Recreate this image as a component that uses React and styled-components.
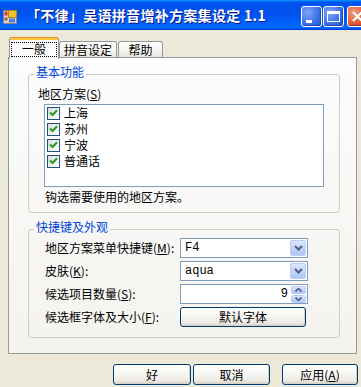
import React from 'react';
import styled, { createGlobalStyle } from 'styled-components';

const GlobalStyle = createGlobalStyle`
  html, body {
    margin: 0;
    padding: 0;
    background: #ECE9D8;
    overflow: hidden;
  }
  body {
    font-family: "Noto Sans CJK SC", sans-serif;
    font-size: 12px;
    color: #000;
  }
`;

const Window = styled.div`
  width: 361px;
  height: 387px;
  overflow: hidden;
  background: #ECE9D8;
  display: flex;
  flex-direction: column;
`;

const TitleBar = styled.div`
  height: 30px;
  flex: none;
  display: flex;
  align-items: center;
  padding-left: 3px;
  background: linear-gradient(180deg, #0997ff, #0053ee 8%, #0050ee 40%, #0066ff 88%, #0066ff 93%, #005bff 95%, #003dd7 96%, #003dd7);
`;

const AppIcon = styled.svg`
  flex: none;
  margin-top: 3px;
`;

const TitleText = styled.div`
  flex: 1 1 auto;
  margin-left: 9px;
  color: #fff;
  font-weight: 700;
  font-size: 14px;
  line-height: 20px;
  white-space: nowrap;
  letter-spacing: 0.3px;
  text-shadow: 1px 1px #0a1883;
`;

const CaptionButtons = styled.div`
  flex: none;
  width: 60px;
  display: flex;
  overflow: hidden;
  margin-top: 3px;
`;

const CaptionButton = styled.div`
  flex: none;
  width: 21px;
  height: 21px;
  box-sizing: border-box;
  margin-right: ${p => p.$gap || 0}px;
  border: 1px solid #fff;
  border-radius: 3px;
  position: relative;
  background: ${p => p.$close
    ? 'radial-gradient(circle at 30% 30%, #f19b7d, #e05a32 60%, #c2401c)'
    : 'radial-gradient(circle at 30% 30%, #7ea4f7, #3c6fe8 60%, #2255d3)'};
  box-shadow: inset -1px -1px 1px rgba(0, 0, 80, 0.35);
`;

const MinBar = styled.div`
  position: absolute;
  left: 4px;
  top: 13px;
  width: 6px;
  height: 3px;
  background: #fff;
`;

const MaxBox = styled.div`
  position: absolute;
  left: 3px;
  top: 4px;
  width: 13px;
  height: 11px;
  box-sizing: border-box;
  border: 1px solid #fff;
  border-top-width: 3px;
`;

const Client = styled.div`
  flex: 1;
  display: flex;
  flex-direction: column;
  padding: 7px 0 0 8px;
`;

const TabStrip = styled.div`
  display: flex;
  align-items: flex-end;
  height: 20px;
  padding-left: 1px;
  position: relative;
  z-index: 1;
`;

const Tab = styled.div`
  box-sizing: border-box;
  width: ${p => p.$w}px;
  height: ${p => (p.$active ? 22 : 16)}px;
  margin-bottom: ${p => (p.$active ? -2 : 0)}px;
  margin-right: ${p => p.$gap || 0}px;
  border: 1px solid #919b9c;
  border-bottom: none;
  border-radius: 3px 3px 0 0;
  display: flex;
  align-items: ${p => (p.$active ? 'flex-start' : 'center')};
  justify-content: center;
  line-height: 14px;
  font-size: 12px;
  background: ${p => p.$active
    ? 'linear-gradient(#ffc83c, #ffc83c) top / 100% 2px no-repeat, #fcfcfe'
    : 'linear-gradient(180deg, #fefefe, #f3f3ef 60%, #e6e5de)'};
  border-top-color: ${p => (p.$active ? '#e68b2c' : '#919b9c')};
  padding-top: ${p => (p.$active ? 4 : 0)}px;
`;

const FocusLabel = styled.span`
  display: block;
  width: 44px;
  box-sizing: border-box;
  height: 13px;
  line-height: 11px;
  text-align: center;
  outline: 1px dotted #000;
  margin-top: 1px;
`;

const TabPanel = styled.div`
  box-sizing: border-box;
  width: 349px;
  height: 297px;
  border: 1px solid #919b9c;
  background: linear-gradient(180deg, #fcfcfe, #f4f3ee);
  padding: 7px 0 0 19px;
  display: flex;
  flex-direction: column;
  gap: 7px;
`;

const Group = styled.fieldset`
  box-sizing: border-box;
  width: 312px;
  margin: 0;
  padding: 0 0 ${p => p.$pb}px 0;
  border: 1px solid #d0d0bf;
  border-radius: 3px;
  min-width: 0;
`;

const Legend = styled.legend`
  margin-left: 5px;
  padding: 0 2px 4px;
  color: #0046d5;
  line-height: 14px;
  font-size: 12px;
`;

const FieldLabel = styled.div`
  line-height: 14px;
  margin: 4px 0 0 9px;
`;

const ListBox = styled.div`
  box-sizing: border-box;
  width: 280px;
  height: 83px;
  margin: 3px 0 0 15px;
  border: 1px solid #7f9db9;
  background: #fff;
  padding: 0 0 0 2px;
`;

const CheckRow = styled.div`
  height: 16px;
  display: flex;
  align-items: center;
  gap: 4px;
  line-height: 14px;
`;

const CheckBox = styled.div`
  box-sizing: border-box;
  width: 13px;
  height: 13px;
  border: 1px solid #1c5180;
  background: linear-gradient(135deg, #dcdcd7, #ffffff);
  display: flex;
  align-items: center;
  justify-content: center;
`;

const Hint = styled.div`
  line-height: 14px;
  margin: 3px 0 0 16px;
`;

const FormRows = styled.div`
  display: flex;
  flex-direction: column;
  gap: 3px;
  padding-left: 16px;
`;

const FormRow = styled.div`
  display: flex;
  align-items: center;
  height: 20px;
`;

const RowLabel = styled.div`
  width: 135px;
  flex: none;
  line-height: 14px;
  white-space: nowrap;
`;

const Combo = styled.div`
  box-sizing: border-box;
  width: 128px;
  height: 20px;
  border: 1px solid #7f9db9;
  background: #fff;
  display: flex;
  align-items: center;
  padding: 1px;
`;

const ComboText = styled.div`
  flex: 1;
  font-family: "Liberation Mono", monospace;
  font-size: 12px;
  padding: 0 3px;
  text-align: ${p => p.$align || 'left'};
`;

const DropButton = styled.div`
  box-sizing: border-box;
  width: 16px;
  height: 16px;
  border: 1px solid #b9cdf9;
  border-radius: 2px;
  background: linear-gradient(180deg, #dce6fd, #c0d1fb 60%, #b1c6f8);
  display: flex;
  align-items: center;
  justify-content: center;
`;

const SpinStack = styled.div`
  display: flex;
  flex-direction: column;
  gap: 1px;
`;

const SpinButton = styled(DropButton)`
  height: 8px;
  width: 15px;
`;

const PushButton = styled.div`
  box-sizing: border-box;
  width: ${p => p.$w}px;
  height: ${p => p.$h || 21}px;
  margin-right: ${p => p.$gap || 0}px;
  border: 1px solid #003c74;
  border-radius: 3px;
  background: linear-gradient(180deg, #ffffff, #f5f5f1 45%, #ecebe6 80%, #d8d2c6);
  box-shadow: inset -1px -1px 0 #d6d0c5;
  display: flex;
  align-items: center;
  justify-content: center;
  line-height: 14px;
  font-size: 12px;
`;

const ButtonRow = styled.div`
  display: flex;
  justify-content: flex-end;
  margin-top: 10px;
  padding-right: 3px;
`;

const Chevron = ({ up }) => (
  <svg width="9" height="6" viewBox="0 0 9 6">
    <path d={up ? 'M1 5 L4.5 1.5 L8 5' : 'M1 1 L4.5 4.5 L8 1'} fill="none" stroke="#4d6185" strokeWidth="2" />
  </svg>
);

const SmallChevron = ({ up }) => (
  <svg width="7" height="4" viewBox="0 0 7 4">
    <path d={up ? 'M0.5 3.5 L3.5 0.5 L6.5 3.5' : 'M0.5 0.5 L3.5 3.5 L6.5 0.5'} fill="none" stroke="#4d6185" strokeWidth="1.6" />
  </svg>
);

const Check = () => (
  <svg width="9" height="8" viewBox="0 0 9 8">
    <path d="M1 3.5 L3.5 6 L8 1.2" fill="none" stroke="#21a121" strokeWidth="2" />
  </svg>
);

const Mn = ({ k }) => <span>(<u>{k}</u>)</span>;

const regions = ['上海', '苏州', '宁波', '普通话'];

export default function App() {
  return (
    <Window>
      <GlobalStyle />
      <TitleBar>
        <AppIcon width="14" height="14" viewBox="0 0 14 14">
          <rect x="0.5" y="0.5" width="13" height="13" fill="#d8d4cc" stroke="#8a8680" />
          <rect x="1.5" y="1.5" width="3" height="4" fill="#d23a2a" />
          <rect x="5.5" y="0.5" width="8" height="7" fill="#f2c12e" stroke="#b08a10" />
          <rect x="1.5" y="7.5" width="3" height="3" fill="#c44a3a" />
          <rect x="6" y="8.5" width="6" height="4" fill="#4a7ed8" />
        </AppIcon>
        <TitleText>「不律」吴语拼音增补方案集设定 1.1</TitleText>
        <CaptionButtons>
          <CaptionButton $gap={1}><MinBar /></CaptionButton>
          <CaptionButton $gap={3}><MaxBox /></CaptionButton>
          <CaptionButton $close>
            <svg width="19" height="19" viewBox="0 0 19 19" style={{ display: 'block' }}>
              <path d="M5 5 L14 14 M14 5 L5 14" stroke="#fff" strokeWidth="2.2" />
            </svg>
          </CaptionButton>
        </CaptionButtons>
      </TitleBar>

      <Client>
        <TabStrip>
          <Tab $active $w={50}><FocusLabel>一般</FocusLabel></Tab>
          <Tab $w={58} $gap={1}>拼音设定</Tab>
          <Tab $w={45}>帮助</Tab>
        </TabStrip>

        <TabPanel>
          <Group $pb={8}>
            <Legend>基本功能</Legend>
            <FieldLabel>地区方案<Mn k="S" /></FieldLabel>
            <ListBox>
              {regions.map(r => (
                <CheckRow key={r}>
                  <CheckBox><Check /></CheckBox>
                  {r}
                </CheckRow>
              ))}
            </ListBox>
            <Hint>钩选需要使用的地区方案。</Hint>
          </Group>

          <Group $pb={10}>
            <Legend>快捷键及外观</Legend>
            <FormRows>
              <FormRow>
                <RowLabel>地区方案菜单快捷键<Mn k="M" />:</RowLabel>
                <Combo>
                  <ComboText>F4</ComboText>
                  <DropButton><Chevron /></DropButton>
                </Combo>
              </FormRow>
              <FormRow>
                <RowLabel>皮肤<Mn k="K" />:</RowLabel>
                <Combo>
                  <ComboText>aqua</ComboText>
                  <DropButton><Chevron /></DropButton>
                </Combo>
              </FormRow>
              <FormRow>
                <RowLabel>候选项目数量<Mn k="S" />:</RowLabel>
                <Combo>
                  <ComboText $align="right">9</ComboText>
                  <SpinStack>
                    <SpinButton><SmallChevron up /></SpinButton>
                    <SpinButton><SmallChevron /></SpinButton>
                  </SpinStack>
                </Combo>
              </FormRow>
              <FormRow>
                <RowLabel>候选框字体及大小<Mn k="F" />:</RowLabel>
                <PushButton $w={126} $h={20}>默认字体</PushButton>
              </FormRow>
            </FormRows>
          </Group>
        </TabPanel>

        <ButtonRow>
          <PushButton $w={78} $gap={2}>好</PushButton>
          <PushButton $w={77} $gap={12}>取消</PushButton>
          <PushButton $w={76}>应用<Mn k="A" /></PushButton>
        </ButtonRow>
      </Client>
    </Window>
  );
}
